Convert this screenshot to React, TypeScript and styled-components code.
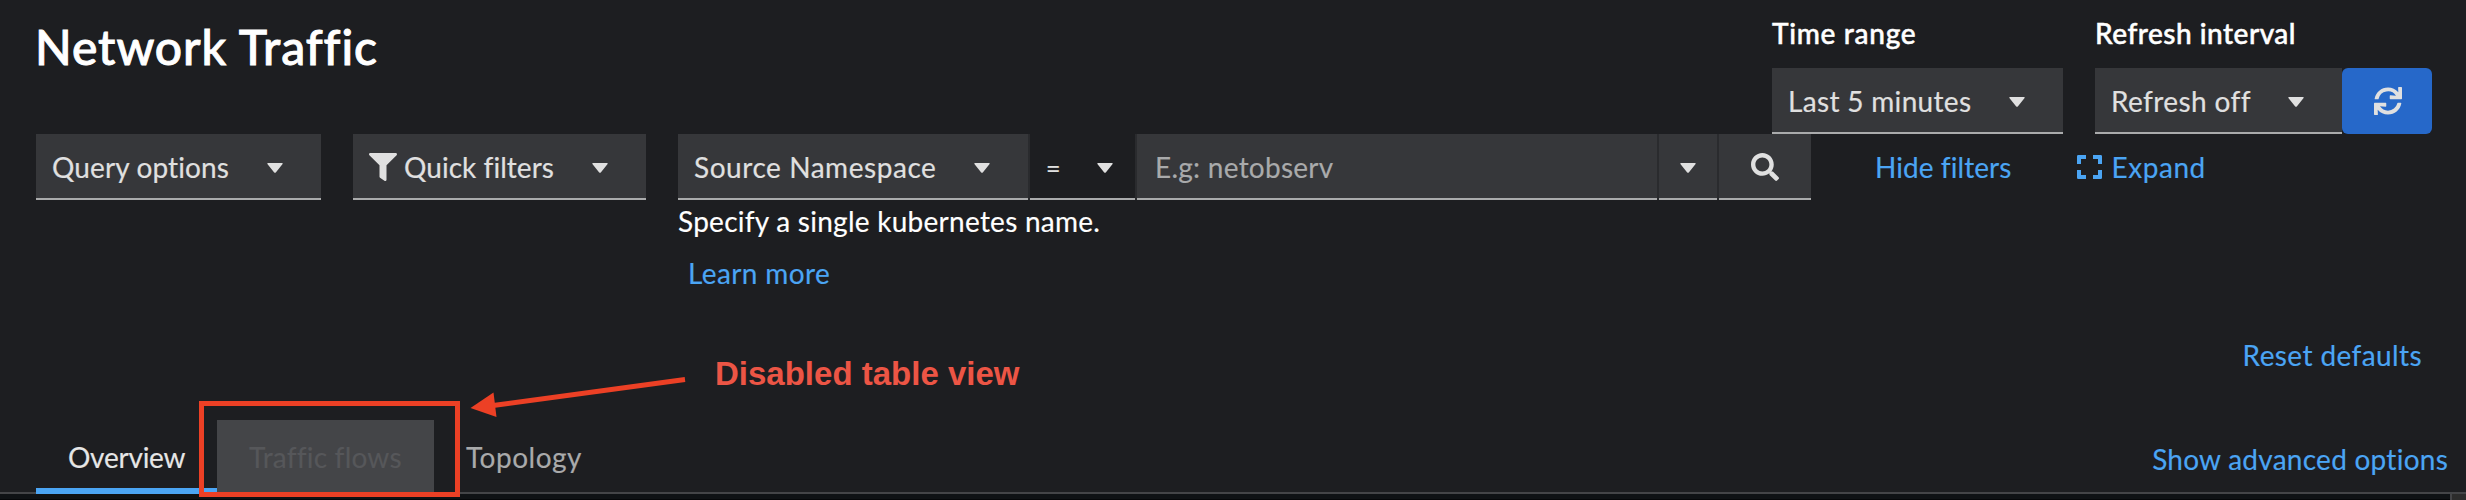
import React from 'react';
import styled, { createGlobalStyle } from 'styled-components';

const GlobalStyle = createGlobalStyle`
  *, *::before, *::after { box-sizing: border-box; }
  body { margin: 0; background: #1d1e21; }
  button { border: 0; padding: 0; background: none; font: inherit; color: inherit; text-align: left; }
`;

const Page = styled.div`
  position: relative;
  display: flex;
  flex-direction: column;
  width: 2466px;
  height: 500px;
  overflow: hidden;
  background: #1d1e21;
  color: #fff;
  font: 400 28px/42px Lato, sans-serif;
  font-variant-ligatures: none;
  -webkit-text-stroke: 0.15px currentColor;
  white-space: nowrap;
`;

const Header = styled.header`
  display: flex;
  justify-content: space-between;
  height: 134px;
  padding: 0 34px 0 35px;
`;

const Title = styled.h1`
  margin: 18px 0 0;
  font-size: 48px;
  font-weight: 500;
  line-height: 58px;
  letter-spacing: 0.93px;
  -webkit-text-stroke: 0.9px currentColor;
`;

const Controls = styled.div`
  display: flex;
  gap: 32px;
  padding-top: 12px;
`;

const Field = styled.div<{ $width: number }>`
  width: ${p => p.$width}px;
`;

const FieldLabel = styled.label<{ $tracking: number }>`
  display: block;
  height: 56px;
  font-weight: 500;
  letter-spacing: ${p => p.$tracking}px;
  -webkit-text-stroke: 0.5px currentColor;
`;

const FieldRow = styled.div`
  display: flex;
`;

const Toggle = styled.button<{ $width: number; $plain?: boolean; $end?: number; $start?: number }>`
  display: flex;
  flex: none;
  align-items: center;
  justify-content: space-between;
  width: ${p => p.$width}px;
  height: 66px;
  margin-left: ${p => p.$start ?? 0}px;
  padding: 0 ${p => p.$end ?? 38}px 0 16px;
  background: ${p => (p.$plain ? '#1d1e21' : '#36373a')};
  border-bottom: 2px solid #aaabac;
  color: #e0e0e0;
  line-height: 62px;
`;

const Label = styled.span<{ $tracking?: number }>`
  padding-top: 2px;
  letter-spacing: ${p => p.$tracking ?? 0}px;
`;

const Operator = styled(Label)`
  font-size: 25px;
  font-weight: 500;
`;

const IconLabel = styled.span`
  display: flex;
  align-items: center;
  gap: 7px;
`;

const RefreshButton = styled.button`
  display: flex;
  align-items: center;
  justify-content: center;
  width: 90px;
  height: 66px;
  padding-left: 2px;
  border-radius: 6px;
  background: #2668c9;
  color: #e0e0e0;
`;

const Toolbar = styled.div`
  display: flex;
  height: 200px;
  padding-left: 36px;
`;

const FilterArea = styled.div`
  width: 1133px;
  margin-left: 32px;
`;

const InputGroup = styled.div`
  display: flex;
  gap: 2px;
  background: #2a2b2e;
`;

const TextBox = styled.div`
  width: 520px;
  height: 66px;
  padding: 1px 0 0 18px;
  background: #36373a;
  border-bottom: 2px solid #aaabac;
  color: #a9aaab;
  line-height: 64px;
  letter-spacing: 0.26px;
`;

const IconButton = styled.button<{ $width: number }>`
  display: flex;
  align-items: center;
  justify-content: center;
  width: ${p => p.$width}px;
  height: 66px;
  background: #36373a;
  border-bottom: 2px solid #aaabac;
  color: #e0e0e0;
`;

const Hint = styled.p`
  margin: 0;
  line-height: 42px;
  letter-spacing: 0.26px;
`;

const Link = styled.a<{ $tracking: number }>`
  display: block;
  color: #4ba5f4;
  letter-spacing: ${p => p.$tracking}px;
`;

const LearnMore = styled(Link)`
  margin: 10px 0 0 10px;
`;

const ToolbarLink = styled(Link)<{ $start: number }>`
  display: flex;
  align-items: center;
  gap: 10px;
  height: 66px;
  margin-left: ${p => p.$start}px;
`;

const ResetRow = styled.div`
  display: flex;
  justify-content: flex-end;
  height: 86px;
  padding-right: 44px;
`;

const TabBar = styled.div`
  display: flex;
  height: 74px;
  padding: 0 18px 0 36px;
  border-bottom: 2px solid #444548;
`;

const Tab = styled.button<{ $state: 'current' | 'disabled' | 'normal'; $width: number; $tracking: number }>`
  display: flex;
  align-items: flex-start;
  width: ${p => p.$width}px;
  height: ${p => (p.$state === 'current' ? 74 : 72)}px;
  padding: 16px 0 0 32px;
  line-height: 42px;
  letter-spacing: ${p => p.$tracking}px;
  color: ${p => ({ current: '#e6e6e6', disabled: '#56575a', normal: '#a9aaab' })[p.$state]};
  background: ${p => (p.$state === 'disabled' ? '#444548' : 'transparent')};
  border-bottom: ${p => (p.$state === 'current' ? '6px solid #4ba5f4' : '0')};
`;

const AdvancedLink = styled(Link)`
  margin: 18px 0 0 auto;
`;

const Content = styled.div`
  display: flex;
  justify-content: flex-end;
  height: 6px;
  background: #0f1215;
  border-bottom: 1px solid #06080a;
`;

const ScrollTrack = styled.div`
  width: 16px;
  height: 6px;
  background: #2c2c2c;
  border-left: 2px solid #444548;
`;

const Highlight = styled.div`
  position: absolute;
  left: 199px;
  top: 401px;
  width: 261px;
  height: 96px;
  border: 5px solid #ec4025;
`;

const Arrow = styled.svg`
  position: absolute;
  left: 465px;
  top: 370px;
`;

const Note = styled.div`
  position: absolute;
  left: 715px;
  top: 354px;
  color: #ec5545;
  font: 700 33px/40px 'Liberation Sans', sans-serif;
  -webkit-text-stroke: 0;
`;

const CaretGlyph = styled.svg`
  flex: none;
  margin-top: 4px;
`;

const RowGlyph = styled.svg`
  flex: none;
  margin-top: 2px;
`;

const Caret = () => (
  <CaretGlyph width="16" height="10" viewBox="0 0 16 10" fill="currentColor">
    <path d="M1 0H15Q16.3 .2 15.4 1.3L9 9.2Q8 10.4 7 9.2L.6 1.3Q-.3 .2 1 0Z" />
  </CaretGlyph>
);

const FilterIcon = () => (
  <RowGlyph width="28" height="28" viewBox="0 0 512 512" fill="currentColor">
    <path d="M487.976 0H24.028C2.71 0-8.047 25.866 7.058 40.971L192 225.941V432c0 7.831 3.821 15.17 10.237 19.662l80 55.98C298.02 518.69 320 507.493 320 487.98V225.941l184.947-184.97C520.021 25.896 509.338 0 487.976 0z" />
  </RowGlyph>
);

const SearchIcon = () => (
  <RowGlyph width="28" height="28" viewBox="0 0 512 512" fill="currentColor">
    <path d="M505 442.7L405.3 343c-4.5-4.5-10.6-7-17-7H372c27.600-35.300 44-79.700 44-128C416 93.100 322.900 0 208 0S0 93.100 0 208s93.100 208 208 208c48.300 0 92.700-16.400 128-44v16.300c0 6.400 2.500 12.500 7 17l99.700 99.700c9.400 9.400 24.600 9.400 33.900 0l28.300-28.300c9.400-9.400 9.400-24.600.1-34zM208 336c-70.700 0-128-57.200-128-128 0-70.700 57.200-128 128-128 70.700 0 128 57.200 128 128 0 70.700-57.200 128-128 128z" />
  </RowGlyph>
);

const SyncIcon = () => (
  <svg width="28" height="28" viewBox="0 0 512 512" fill="currentColor">
    <path d="M440.65 12.570l4 82.770A247.160 247.160 0 0 0 255.830 8C134.730 8 33.910 94.920 12.290 209.820A12 12 0 0 0 24.090 224h49.050a12 12 0 0 0 11.670-9.260 175.910 175.910 0 0 1 317-56.940l-101.460-4.860a12 12 0 0 0-12.570 12v47.410a12 12 0 0 0 12 12H500a12 12 0 0 0 12-12V12a12 12 0 0 0-12-12h-47.370a12 12 0 0 0-11.980 12.570zM255.830 432a175.610 175.610 0 0 1-146-77.800l101.800 4.870a12 12 0 0 0 12.570-12v-47.400a12 12 0 0 0-12-12H12a12 12 0 0 0-12 12V500a12 12 0 0 0 12 12h47.350a12 12 0 0 0 12-12.600l-4.150-82.570A247.170 247.170 0 0 0 255.830 504c121.110 0 221.930-86.920 243.550-201.820a12 12 0 0 0-11.800-14.180h-49.050a12 12 0 0 0-11.670 9.260A175.860 175.860 0 0 1 255.830 432z" />
  </svg>
);

const ExpandIcon = () => (
  <svg width="25" height="24" viewBox="0 0 25 24" fill="currentColor">
    <path d="M1.300 0H9V4H4V9H0V1.300Q0 0 1.300 0ZM16 0H23.700Q25 0 25 1.300V9H21V4H16ZM0 15H4V20H9V24H1.300Q0 24 0 22.700ZM21 15H25V22.700Q25 24 23.700 24H16V20H21Z" />
  </svg>
);

export default function App() {
  return (
    <>
      <GlobalStyle />
      <Page>
        <Header>
          <Title>Network Traffic</Title>
          <Controls>
            <Field $width={291}>
              <FieldLabel $tracking={0.7}>Time range</FieldLabel>
              <Toggle $width={291}>
                <Label $tracking={0.32}>Last 5 minutes</Label>
                <Caret />
              </Toggle>
            </Field>
            <Field $width={337}>
              <FieldLabel $tracking={0.5}>Refresh interval</FieldLabel>
              <FieldRow>
                <Toggle $width={247}>
                  <Label $tracking={0.4}>Refresh off</Label>
                  <Caret />
                </Toggle>
                <RefreshButton aria-label="Refresh">
                  <SyncIcon />
                </RefreshButton>
              </FieldRow>
            </Field>
          </Controls>
        </Header>

        <Toolbar>
          <Toggle $width={285}>
            <Label $tracking={0.12}>Query options</Label>
            <Caret />
          </Toggle>
          <Toggle $width={293} $start={32}>
            <IconLabel>
              <FilterIcon />
              <Label $tracking={0.04}>Quick filters</Label>
            </IconLabel>
            <Caret />
          </Toggle>
          <FilterArea>
            <InputGroup>
              <Toggle $width={350}>
                <Label $tracking={0.55}>Source Namespace</Label>
                <Caret />
              </Toggle>
              <Toggle $width={105} $plain $end={22}>
                <Operator>=</Operator>
                <Caret />
              </Toggle>
              <TextBox>E.g: netobserv</TextBox>
              <IconButton $width={58} aria-label="Suggestions">
                <Caret />
              </IconButton>
              <IconButton $width={92} aria-label="Search">
                <SearchIcon />
              </IconButton>
            </InputGroup>
            <Hint>Specify a single kubernetes name.</Hint>
            <LearnMore $tracking={0.38}>Learn more</LearnMore>
          </FilterArea>
          <ToolbarLink $tracking={0.07} $start={64}>Hide filters</ToolbarLink>
          <ToolbarLink $tracking={0.55} $start={65}>
            <ExpandIcon />
            Expand
          </ToolbarLink>
        </Toolbar>

        <ResetRow>
          <Link $tracking={0.4}>Reset defaults</Link>
        </ResetRow>

        <TabBar>
          <Tab $state="current" $width={181} $tracking={-0.24}>Overview</Tab>
          <Tab $state="disabled" $width={217} $tracking={0.2}>Traffic flows</Tab>
          <Tab $state="normal" $width={180} $tracking={0.5}>Topology</Tab>
          <AdvancedLink $tracking={0.25}>Show advanced options</AdvancedLink>
        </TabBar>
        <Content>
          <ScrollTrack />
        </Content>

        <Highlight />
        <Arrow width="230" height="60" viewBox="465 370 230 60">
          <path d="M685 379.500L493 405.500" stroke="#ec4025" strokeWidth="5" />
          <path d="M470.500 408L493.500 392.500L496.500 417Z" fill="#ec4025" />
        </Arrow>
        <Note>Disabled table view</Note>
      </Page>
    </>
  );
}
